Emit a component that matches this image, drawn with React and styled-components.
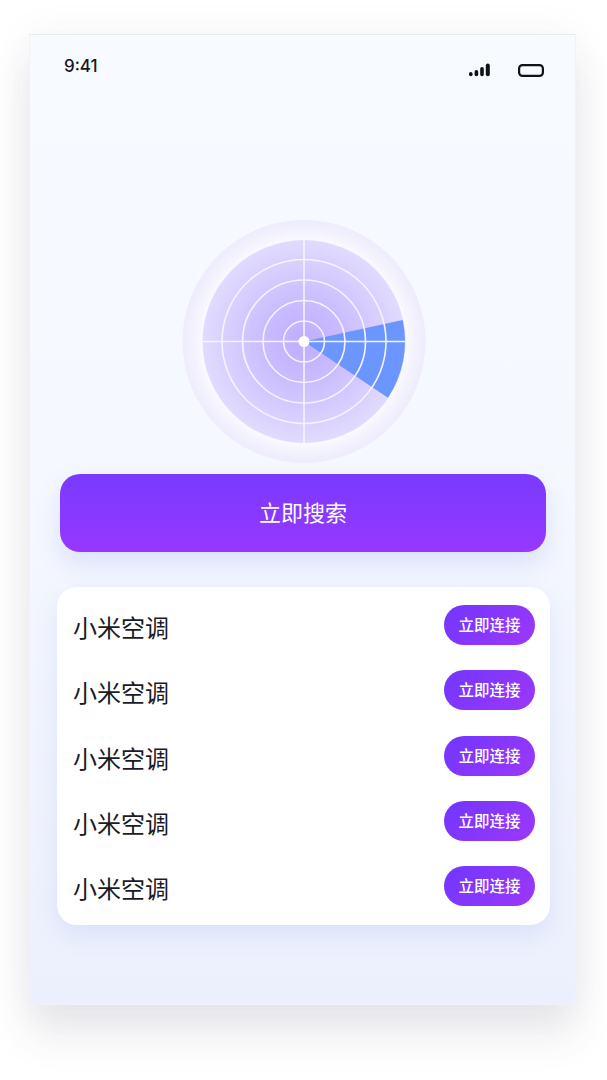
import React from "react";
import styled, { createGlobalStyle } from "styled-components";

const GlobalStyle = createGlobalStyle`
  html, body {
    margin: 0;
    padding: 0;
    background: #fff;
  }
  * {
    box-sizing: border-box;
  }
`;

const Page = styled.div`
  width: 607px;
  height: 1080px;
  padding: 34px 31px 0 29px;
  overflow: hidden;
  font-family: "Noto Sans CJK SC", "Inter", sans-serif;
`;

const Screen = styled.div`
  width: 547px;
  height: 971px;
  display: flex;
  flex-direction: column;
  align-items: flex-start;
  background: linear-gradient(180deg, #f7faff 0%, #f5f8ff 45%, #ecf0fd 100%);
  border: 1px solid #f1f2f6;
  border-top-color: #e9eaef;
  box-shadow: 0 30px 38px rgba(60, 64, 90, 0.11), 0 0 40px rgba(60, 64, 90, 0.05);
`;

const StatusBar = styled.div`
  width: 100%;
  height: 62px;
  padding: 0 31px 0 34px;
  display: flex;
  justify-content: space-between;
`;

const Time = styled.span`
  margin-top: 20px;
  font-family: "Inter", sans-serif;
  font-size: 17px;
  line-height: 22px;
  font-weight: 500;
  color: #16171d;
`;

const StatusIcons = styled.div`
  margin-top: 27px;
  height: 16px;
  display: flex;
  align-items: center;
  gap: 28px;
`;

const RadarWrap = styled.div`
  margin: 123px 0 0 152px;
  width: 244px;
  height: 244px;
  flex-shrink: 0;
`;

const SearchButton = styled.button`
  margin: 10px 0 0 30px;
  width: 486px;
  height: 78px;
  flex-shrink: 0;
  border: 0;
  border-radius: 20px;
  background: linear-gradient(180deg, #7a3aff 0%, #9638ff 100%);
  box-shadow: 0 12px 24px rgba(110, 130, 240, 0.18);
  color: #fff;
  font-family: inherit;
  font-size: 22px;
  font-weight: 400;
  padding: 0 0 5px;
`;

const DeviceList = styled.div`
  margin: 35px 0 0 27px;
  width: 493px;
  height: 338px;
  padding: 18px 15px 0 16px;
  border-radius: 20px;
  background: #fff;
  box-shadow: 0 10px 24px rgba(100, 120, 220, 0.13);
  display: flex;
  flex-direction: column;
  gap: 25.3px;
`;

const Row = styled.div`
  height: 40px;
  display: flex;
  justify-content: space-between;
  align-items: flex-start;
`;

const DeviceName = styled.span`
  margin-top: 5px;
  font-size: 24px;
  line-height: 34px;
  font-weight: 400;
  color: #1a1b26;
`;

const ConnectButton = styled.button`
  width: 91px;
  height: 40px;
  padding: 0 0 2px;
  border: 0;
  border-radius: 20px;
  background: linear-gradient(135deg, #7136ff 0%, #9c38f8 100%);
  color: #fff;
  font-family: inherit;
  font-size: 15.5px;
  font-weight: 500;
  line-height: 38px;
`;

const CX = 122;
const CY = 121.5;

const polar = (r, deg) => {
  const a = (deg * Math.PI) / 180;
  return [CX + r * Math.cos(a), CY + r * Math.sin(a)];
};

const rings = [20.5, 41, 61.5, 82];

const Radar = () => {
  const [x1, y1] = polar(101, -12.3);
  const [x2, y2] = polar(101, 33.8);
  return (
    <svg width="244" height="244" viewBox="0 0 244 244">
      <defs>
        <radialGradient id="halo" cx="50%" cy="50%" r="50%">
          <stop offset="84%" stopColor="#f9f9ff" />
          <stop offset="91%" stopColor="#f3f2fe" />
          <stop offset="100%" stopColor="#eeecfd" />
        </radialGradient>
        <radialGradient id="disc" cx="50%" cy="50%" r="50%">
          <stop offset="0%" stopColor="#bfacff" />
          <stop offset="40%" stopColor="#cabcff" />
          <stop offset="70%" stopColor="#d6ccff" />
          <stop offset="100%" stopColor="#e1dbfe" />
        </radialGradient>
      </defs>
      <circle cx={CX} cy={CY} r="121.5" fill="url(#halo)" />
      <circle cx={CX} cy={CY} r="101.5" fill="url(#disc)" />
      <path
        d={`M${CX} ${CY} L${x1} ${y1} A101 101 0 0 1 ${x2} ${y2} Z`}
        fill="#6c96ff"
      />
      <g fill="none" stroke="#f6f3ff" strokeWidth="1.6">
        {rings.map((r) => (
          <circle key={r} cx={CX} cy={CY} r={r} />
        ))}
        <path d={`M${CX} 20V223M20.5 ${CY}H223.5`} />
      </g>
      <circle cx={CX} cy={CY} r="5.5" fill="#fff" />
    </svg>
  );
};

const Signal = () => (
  <svg width="21" height="14" viewBox="0 0 21 14">
    <g fill="#111218">
      <rect x="0" y="9" width="3.6" height="4.3" rx="1.8" />
      <rect x="5.6" y="7" width="3.6" height="6.3" rx="1.8" />
      <rect x="11.2" y="4" width="3.6" height="9.3" rx="1.8" />
      <rect x="16.8" y="0.5" width="4" height="12.8" rx="2" />
    </g>
  </svg>
);

const Battery = () => (
  <svg width="26" height="13" viewBox="0 0 26 13">
    <rect x="1.1" y="1.1" width="23.8" height="10.8" rx="3.4" fill="none" stroke="#111218" strokeWidth="2.2" />
  </svg>
);

const devices = ["小米空调", "小米空调", "小米空调", "小米空调", "小米空调"];

export default function App() {
  return (
    <Page>
      <GlobalStyle />
      <Screen>
        <StatusBar>
          <Time>9:41</Time>
          <StatusIcons>
            <Signal />
            <Battery />
          </StatusIcons>
        </StatusBar>
        <RadarWrap>
          <Radar />
        </RadarWrap>
        <SearchButton>立即搜索</SearchButton>
        <DeviceList>
          {devices.map((name, i) => (
            <Row key={i}>
              <DeviceName>{name}</DeviceName>
              <ConnectButton>立即连接</ConnectButton>
            </Row>
          ))}
        </DeviceList>
      </Screen>
    </Page>
  );
}
